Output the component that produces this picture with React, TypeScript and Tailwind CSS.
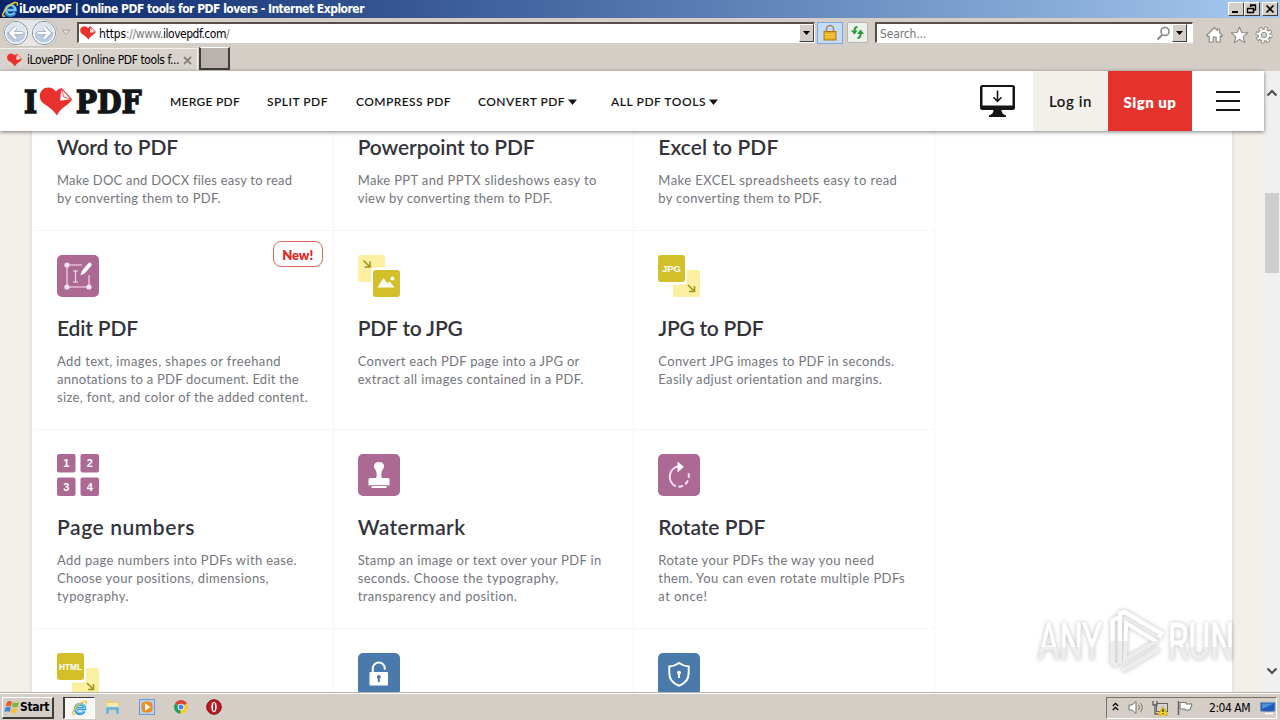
import React, { useLayoutEffect, useRef, useState } from "react";

const RALE = "font-['Lato','Open_Sans',sans-serif]";
const TAHOMA = "font-['DejaVu_Sans_Condensed','DejaVu_Sans',sans-serif]";

/* Text spaced out to an exact advance width. */
function Fit({ w, children, className = "" }: { w: number; children: string; className?: string }) {
  const ref = useRef<HTMLSpanElement>(null);
  const [spacing, setSpacing] = useState(0);
  useLayoutEffect(() => {
    const el = ref.current;
    if (!el) return;
    el.style.letterSpacing = "0px";
    const natural = el.getBoundingClientRect().width;
    const next = (w - natural) / children.length;
    el.style.letterSpacing = `${next}px`;
    setSpacing(next);
  }, [w, children]);
  return (
    <span ref={ref} className={`inline-block whitespace-pre ${className}`} style={{ letterSpacing: `${spacing}px` }}>
      {children}
    </span>
  );
}

function Heart({ className }: { className: string }) {
  return (
    <svg viewBox="0 0 34 30" className={className}>
      <path
        d="M18 29.500 C15 24 9 20.500 3.500 16.500 C-1.500 12 -.5 4.500 4.500 1.600 C9.500 -1 14.500 1 17 4.600 C18.500 2.500 20.500 1.500 23 1.200 L33.500 12.500 C32.500 18 22 20.500 18 29.500 Z"
        fill="#e8302c"
      />
      <path d="M22.300 3.200 L21.300 14.300 L32 12.800 Z" fill="#fff" />
      <path d="M23 2.200 L32.600 12.600 L25 10.300 Z" fill="#fff" stroke="#e8302c" strokeWidth=".8" />
    </svg>
  );
}

function IeLogo({ className }: { className: string }) {
  return (
    <svg viewBox="0 0 18 18" className={className}>
      <path d="M13.700 12.500 A5.300 5.300 0 1 1 14.300 9.700 H5.500" fill="none" stroke="#2c8fd2" strokeWidth="3.400" />
      <path d="M13.400 12 A5 5 0 1 1 14.200 9.500 H5.500" fill="none" stroke="#7cd2f8" strokeWidth="1.700" />
      <path d="M3.500 15.800 C-1.500 18 1 11 6 6.300 C11 1.500 18 -1 16 5" fill="none" stroke="#efc437" strokeWidth="1.600" />
    </svg>
  );
}

const P = "#ab6993";
const Y = "#d3bf2a";
const YL = "#fbf0a2";

function EditIcon() {
  return (
    <>
      <rect width="42" height="42" rx="5" fill={P} />
      <path d="M10 10H25M10 10V32H32V20" fill="none" stroke="#fbe3f5" strokeWidth="1.100" />
      <g fill="#fbe3f5">
        <circle cx="10" cy="10" r="2.600" /><circle cx="10" cy="32" r="2.600" /><circle cx="32" cy="32" r="2.600" />
      </g>
      <path d="M16 16h5M18.500 16v11M16 27h5" stroke="#fbe3f5" strokeWidth="1.100" fill="none" />
      <path d="M23.500 20.500 L24.800 16 L31.300 8.200 Q32.800 6.800 34.200 8.200 Q35.200 9.500 34.200 10.900 L27.600 18.500 Z" fill="#fff" />
    </>
  );
}
function Arrow({ x, y }: { x: number; y: number }) {
  return <path transform={`translate(${x} ${y})`} d="M0 0L6 6M6.500 1V6.500H1" fill="none" stroke="#a5911a" strokeWidth="1.600" />;
}
function PdfToJpgIcon() {
  return (
    <>
      <path d="M2 0H25Q27 0 27 2V12.500H16Q13 12.500 13 16V27H2Q0 27 0 25V2Q0 0 2 0Z" fill={YL} />
      <Arrow x={5.500} y={5.500} />
      <rect x="15" y="15" width="27" height="27" rx="3" fill={Y} />
      <path d="M19.500 32.500 L25.500 23 L29.500 28.500 L31.500 26.200 L36.500 32.500 Z" fill="#fff" />
      <circle cx="34.500" cy="23.500" r="1.900" fill="#fff" />
    </>
  );
}
function ToPdf({ label }: { label: string }) {
  return (
    <>
      <rect width="27" height="27" rx="3" fill={Y} />
      <path d="M29 15H40Q42 15 42 17V40Q42 42 40 42H17Q15 42 15 40V29.500H26Q29 29.500 29 27Z" fill={YL} />
      <text x="13.500" y="17" textAnchor="middle" textLength={label === "JPG" ? 19 : 23} lengthAdjust="spacingAndGlyphs" fill="#fff" className="font-['Liberation_Sans',sans-serif] text-[9px] font-bold">{label}</text>
      <Arrow x={30} y={30} />
    </>
  );
}
function NumbersIcon() {
  const cells: [string, number, number][] = [["1", 0, 0], ["2", 23.500, 0], ["3", 0, 23.500], ["4", 23.500, 23.500]];
  return (
    <>
      {cells.map(([n, x, y]) => (
        <g key={n}>
          <rect x={x} y={y} width="18.500" height="18.500" rx="2" fill={P} />
          <text x={x + 9.250} y={y + 13.200} textAnchor="middle" fill="#fff" className="font-['Liberation_Sans',sans-serif] text-[11px] font-bold">{n}</text>
        </g>
      ))}
    </>
  );
}
function StampIcon() {
  return (
    <>
      <rect width="42" height="42" rx="5" fill={P} />
      <path d="M18.300 24 C19 20 18.700 17.500 17.200 15.500 C14.200 11.500 17 8 21 8 C25 8 27.800 11.500 24.800 15.500 C23.300 17.500 23 20 23.700 24 H30 Q31.500 24 31.500 25.500 V31.500 H28.500 V34 H13.500 V31.500 H10.500 V25.500 Q10.500 24 12 24Z" fill="#fff" />
      <path d="M12 31.600H30" stroke={P} strokeWidth=".9" />
    </>
  );
}
function RotateIcon() {
  return (
    <>
      <rect width="42" height="42" rx="5" fill={P} />
      <path d="M17.800 32.300 A10.600 10.600 0 0 1 20.500 12.300" fill="none" stroke="#fbe3f5" strokeWidth="2" />
      <path d="M20.500 32.800 A10.600 10.600 0 0 0 29.500 17" fill="none" stroke="#fbe3f5" strokeWidth="2" strokeDasharray="4.500 2.800" />
      <path d="M19.500 7.500 L25.800 12.800 L19.500 18.500 Z" fill="#fff" />
    </>
  );
}
function UnlockIcon() {
  return (
    <>
      <rect width="42" height="42" rx="5" fill="#4a7aac" />
      <path d="M14.800 19V15.500a6 6 0 0 1 12 0V16.800" fill="none" stroke="#fff" strokeWidth="2" />
      <rect x="11.500" y="19" width="18.500" height="13.500" rx="1" fill="#fff" />
      <circle cx="20.800" cy="24" r="1.900" fill="#4a7aac" /><path d="M19.800 24h2v5h-2z" fill="#4a7aac" />
    </>
  );
}
function ShieldIcon() {
  return (
    <>
      <rect width="42" height="42" rx="5" fill="#4a7aac" />
      <path d="M21 10 Q25.500 13.200 30.700 13.400 V20 C30.700 26.500 27 30.500 21 32.700 C15 30.500 11.300 26.500 11.300 20 V13.400 Q16.500 13.200 21 10Z" fill="none" stroke="#fff" strokeWidth="2" />
      <circle cx="21" cy="19.700" r="2" fill="#fff" /><path d="M20 20h2v5h-2z" fill="#fff" />
    </>
  );
}

type Line = [string, number];
type Tool = { title: Line; lines: Line[]; icon: React.ReactNode; badge?: boolean };

const top: Tool[] = [
  { title: ["Word to PDF", 121], lines: [["Make DOC and DOCX files easy to read", 235], ["by converting them to PDF.", 164]], icon: null },
  { title: ["Powerpoint to PDF", 177], lines: [["Make PPT and PPTX slideshows easy to", 239], ["view by converting them to PDF.", 195]], icon: null },
  { title: ["Excel to PDF", 120], lines: [["Make EXCEL spreadsheets easy to read", 239], ["by converting them to PDF.", 164]], icon: null },
];
const middle: Tool[] = [
  { title: ["Edit PDF", 81], badge: true, icon: <EditIcon />, lines: [["Add text, images, shapes or freehand", 224], ["annotations to a PDF document. Edit the", 242], ["size, font, and color of the added content.", 251]] },
  { title: ["PDF to JPG", 105], icon: <PdfToJpgIcon />, lines: [["Convert each PDF page into a JPG or", 222], ["extract all images contained in a PDF.", 226]] },
  { title: ["JPG to PDF", 105], icon: <ToPdf label="JPG" />, lines: [["Convert JPG images to PDF in seconds.", 236], ["Easily adjust orientation and margins.", 224]] },
  { title: ["Page numbers", 138], icon: <NumbersIcon />, lines: [["Add page numbers into PDFs with ease.", 240], ["Choose your positions, dimensions,", 212], ["typography.", 72]] },
  { title: ["Watermark", 108], icon: <StampIcon />, lines: [["Stamp an image or text over your PDF in", 244], ["seconds. Choose the typography,", 201], ["transparency and position.", 160]] },
  { title: ["Rotate PDF", 107], icon: <RotateIcon />, lines: [["Rotate your PDFs the way you need", 216], ["them. You can even rotate multiple PDFs", 247], ["at once!", 49]] },
];
const bottom = [<ToPdf key="h" label="HTML" />, <UnlockIcon key="u" />, <ShieldIcon key="s" />];

function CardText({ tool }: { tool: Tool }) {
  return (
    <>
      <h3 className="h-[26px] text-[21px] font-semibold leading-[26px] text-[#33333b]"><Fit w={tool.title[1]}>{tool.title[0]}</Fit></h3>
      <div className="mt-[11px] text-[13px] leading-[18px] text-[#75757c]">
        {tool.lines.map(([t, w]) => <div key={t} className="h-[18px]"><Fit w={w}>{t}</Fit></div>)}
      </div>
    </>
  );
}

function TitleBar() {
  const btn = "flex h-[14px] w-4 items-center justify-center border border-t-white border-l-white border-r-[#404040] border-b-[#404040] bg-[#d5cec7]";
  return (
    <div className="flex h-[18px] items-center bg-linear-to-r from-[#0a246a] to-[#a6caf0] pr-[2px] pl-[2px]">
      <IeLogo className="h-[17px] w-[17px]" />
      <Fit w={345} className="text-[12px] font-bold leading-[18px] text-white">iLovePDF | Online PDF tools for PDF lovers - Internet Explorer</Fit>
      <div className="ml-auto flex">
        <div className={btn}><svg width="12" height="10"><path d="M2 8h6" stroke="#000" strokeWidth="2" /></svg></div>
        <div className={btn}><svg width="12" height="10"><path d="M4.500 3V1.500H9.500V6H8M4 1h6M1.500 4.500h6v4h-6zM1 4.500h7" fill="none" stroke="#000" strokeWidth="1.300" /></svg></div>
        <div className={`ml-[2px] ${btn}`}><svg width="10" height="10"><path d="M1.500 1.500l7 7M8.500 1.500l-7 7" stroke="#000" strokeWidth="1.700" /></svg></div>
      </div>
    </div>
  );
}

function NavCircle({ flip }: { flip?: boolean }) {
  return (
    <svg width="26" height="26" viewBox="0 0 26 26" className={flip ? "-scale-x-100" : ""}>
      <circle cx="13" cy="13" r="11.500" fill="#bccbde" stroke="#7d8794" />
      <circle cx="13" cy="13" r="10.300" fill="none" stroke="#f4f8fb" strokeWidth="1.500" />
      <path d="M3 12a10 10 0 0 1 20 0Z" fill="#dce4ee" />
      <path d="M19.500 13H8M13 7.500L7.500 13l5.500 5.500" fill="none" stroke="#8fa0b8" strokeWidth="4" />
      <path d="M19.500 13H8M13 7.500L7.500 13l5.500 5.500" fill="none" stroke="#fff" strokeWidth="2.600" />
    </svg>
  );
}

function DropButton() {
  return (
    <div className="flex h-[18px] w-[15px] items-center justify-center border border-t-white border-l-white border-r-[#404040] border-b-[#404040] bg-[#d5cec7]">
      <svg width="7" height="4"><path d="M0 0h7L3.500 4z" fill="#000" /></svg>
    </div>
  );
}

function AddressBar() {
  const field = "flex h-[21px] items-center border border-t-2 border-t-[#55504c] border-l-2 border-l-[#55504c] border-r-white border-b-white bg-white";
  return (
    <div className="flex h-[29px] items-center bg-[#d5cec7] pl-[3px]">
      <div className="flex rounded-full bg-[#e6e6e7] shadow-[0_0_1px_#777]"><NavCircle /><span className="w-[2px]" /><NavCircle flip /></div>
      <svg width="10" height="7" className="ml-[4px]"><path d="M1 1h8L5 5.500z" fill="#e4dfda" stroke="#a8a29c" /></svg>
      <div className={`ml-[6px] w-[738px] ${field}`}>
        <Heart className="ml-[1px] h-[14px] w-[16px]" />
        <div className="ml-[3px] mt-[1px] flex text-[12px] leading-[16px] text-[#777]">
          <Fit w={27} className="text-black">https</Fit><Fit w={37}>://www.</Fit><Fit w={63} className="text-black">ilovepdf.com</Fit><Fit w={4}>/</Fit>
        </div>
        <div className="ml-auto"><DropButton /></div>
      </div>
      <div className="ml-[2px] flex h-[22px] w-[26px] items-center justify-center border border-[#7fa9da] bg-[#c4dcf8]">
        <svg width="14" height="17"><path d="M3.500 8V5a3.500 3.500 0 0 1 7 0v3" fill="none" stroke="#9c8c64" strokeWidth="1.600" /><rect x="1" y="7.500" width="12" height="8.500" fill="#e9ae1d" stroke="#b57b12" /><path d="M2 10.500h10M2 13h10" stroke="#f8d258" /></svg>
      </div>
      <div className="ml-[4px] flex h-[21px] w-[21px] items-center justify-center rounded-[2px] border border-[#b9b5b0] bg-[#edf1ee]">
        <svg width="15" height="15"><path d="M7.500 2C5 2 4.500 3.500 4.500 6M7.500 13c2.500 0 3-1.500 3-4" fill="none" stroke="#2c9a35" strokeWidth="2" /><path d="M.8 5.500h7L4.500 9.500zM7.200 9h7L10.500 4.500z" fill="#2c9a35" /></svg>
      </div>
      <div className={`ml-[7px] w-[318px] ${field}`}>
        <Fit w={46} className="ml-[3px] mt-[1px] text-[12px] leading-[16px] text-[#777]">Search...</Fit>
        <svg width="15" height="15" className="ml-auto"><circle cx="9" cy="5.500" r="4" fill="none" stroke="#888" strokeWidth="1.600" /><path d="M6 9L1.500 13.500" stroke="#888" strokeWidth="2.200" /></svg>
        <div className="mr-[5px] ml-[1px]"><DropButton /></div>
      </div>
      <svg width="72" height="20" viewBox="0 0 72 20" className="mt-[4px] ml-[12px]" fill="#fff" stroke="#8b8783" strokeWidth="1.100" strokeLinejoin="round">
        <path d="M1.500 10.500L9.500 2.500l3 3V4h2v3.500l3 3-1.300 1.300-1-1V17h-4v-5h-3v5h-4v-6.200l-1 1z" />
        <path d="M34.500 2l2.300 5.500 6 .4-4.600 3.900 1.500 5.800-5.200-3.200-5.200 3.200 1.500-5.800L26.200 7.900l6-.4z" />
        <circle cx="59" cy="10" r="6.500" fill="none" stroke="#85817d" strokeWidth="4" strokeDasharray="3.200 1.905" strokeDashoffset=".6" />
        <circle cx="59" cy="10" r="4.500" fill="none" stroke="#85817d" strokeWidth="4.500" />
        <circle cx="59" cy="10" r="6.500" fill="none" stroke="#fff" strokeWidth="2.400" strokeDasharray="2 3.105" />
        <circle cx="59" cy="10" r="4.300" fill="none" stroke="#fff" strokeWidth="2.600" />
      </svg>
    </div>
  );
}

function TabStrip() {
  return (
    <div className="flex h-6 bg-[#d5cec7]">
      <div className="mt-[1px] flex h-[23px] w-[198px] items-center border-t border-r border-[#f3f0ed] bg-[#d8d2cc] pl-[7px]">
        <Heart className="h-[14px] w-[15px]" />
        <Fit w={152} className="ml-[5px] text-[12px] leading-[16px]">iLovePDF | Online PDF tools f...</Fit>
        <svg width="9" height="9" className="ml-[4px]"><path d="M1 1l7 7M8 1L1 8" stroke="#88827d" strokeWidth="1.800" /></svg>
      </div>
      <div className="ml-[1px] h-[23px] w-[31px] border-2 border-t border-t-white border-l-[#403c3a] border-r-[#403c3a] border-b-[#403c3a] bg-[#b9b2ad]" />
    </div>
  );
}

function Header() {
  const item = "text-[12px] font-semibold leading-[16px] text-[#161616]";
  const caret = <svg width="9" height="6" className="mb-[1px]"><path d="M0 .5h9L4.500 6z" fill="#161616" /></svg>;
  return (
    <header className={`z-10 flex h-[60px] items-center bg-white shadow-[0_1px_4px_rgba(0,0,0,0.5)] ${RALE}`}>
      <div className="flex w-[170px] items-center pt-[1px] pl-[24px] font-['DejaVu_Serif_Condensed','DejaVu_Serif',serif] text-[31px] font-bold leading-[30px] text-[#121619] [-webkit-text-stroke:1.500px_#121619]">
        <Fit w={13}>I</Fit><Heart className="mr-[3px] ml-[2px] h-[29px] w-[34px]" /><Fit w={66}>PDF</Fit>
      </div>
      <nav className="mt-[2px] flex h-[18px] items-center">
        <Fit w={70} className={item}>MERGE PDF</Fit>
        <Fit w={61} className={`ml-[27px] ${item}`}>SPLIT PDF</Fit>
        <Fit w={95} className={`ml-[28px] ${item}`}>COMPRESS PDF</Fit>
        <div className="ml-[27px] flex items-center gap-[3px]"><Fit w={87} className={item}>CONVERT PDF</Fit>{caret}</div>
        <div className="ml-[34px] flex items-center gap-[3px]"><Fit w={95} className={item}>ALL PDF TOOLS</Fit>{caret}</div>
      </nav>
      <svg width="35" height="33" viewBox="0 0 35 33" className="mr-[18px] ml-auto">
        <path fillRule="evenodd" d="M2.500 0h30Q35 0 35 2.500V22.500Q35 25 32.500 25H21.500Q21.500 29 26 30.500V32H9V30.500Q13.500 29 13.500 25H2.500Q0 25 0 22.500V2.500Q0 0 2.500 0ZM2.500 2V20.500H32.500V2Z" fill="#161616" />
        <path d="M17.500 5.500V16M13.500 12.300l4 4 4-4" fill="none" stroke="#161616" strokeWidth="1.600" />
      </svg>
      <div className="flex h-full w-[75px] items-center justify-center bg-[#f3f0ec] pb-[1px] text-[15px] font-semibold text-[#161616]"><Fit w={43} className="mt-[2px]">Log in</Fit></div>
      <div className="flex h-full w-[84px] items-center justify-center bg-[#e5322d] text-[15px] font-extrabold text-white"><Fit w={53} className="mt-[2px]">Sign up</Fit></div>
      <div className="flex w-[72px] flex-col items-center gap-[7px]"><span className="h-[2px] w-6 bg-[#161616]" /><span className="h-[2px] w-6 bg-[#161616]" /><span className="h-[2px] w-6 bg-[#161616]" /></div>
    </header>
  );
}

function Tools() {
  const edge = "border-r border-b border-[#f6f6f8] pl-6";
  return (
    <main className={`flex-1 overflow-hidden bg-[#f3f0ec] pl-8 ${RALE}`}>
      <div className="h-full w-[1200px] bg-white pl-[1px] shadow-[0_0_4px_rgba(0,0,0,0.14)]">
        <div className="grid w-[902px] grid-cols-3">
          {top.map((t) => <div key={t.title[0]} className={`h-[100px] pt-[3px] ${edge}`}><CardText tool={t} /></div>)}
          {middle.map((t) => (
            <div key={t.title[0]} className={`relative h-[199px] pt-6 ${edge}`}>
              <svg width="42" height="42" viewBox="0 0 42 42" className="mb-[18px] block">{t.icon}</svg>
              <CardText tool={t} />
              {t.badge && <div className="absolute top-[10px] right-[10px] flex h-[26px] w-[50px] items-center justify-center rounded-lg border border-[#e0675c] text-[13px] font-extrabold text-[#dc2d2b]"><Fit w={31} className="mt-[3px]">New!</Fit></div>}
            </div>
          ))}
          {bottom.map((icon, i) => <div key={i} className={`h-[80px] pt-6 ${edge}`}><svg width="42" height="42" viewBox="0 0 42 42">{icon}</svg></div>)}
        </div>
      </div>
    </main>
  );
}

function ScrollBar() {
  return (
    <div className="flex w-4 flex-col items-center bg-[#f0f0f0]">
      <svg width="12" height="8" className="mt-[18px]"><path d="M1.500 6.500L6 2l4.500 4.500" fill="none" stroke="#505050" strokeWidth="2.200" /></svg>
      <div className="mt-24 h-20 w-[14px] bg-[#cdcdcd]" />
      <svg width="12" height="8" className="mt-auto mb-[17px]"><path d="M1.500 1.500L6 6l4.500-4.500" fill="none" stroke="#505050" strokeWidth="2.200" /></svg>
    </div>
  );
}

function Watermark() {
  const font = "font-['Roboto',sans-serif] text-[50px]";
  return (
    <svg width="216" height="72" viewBox="0 0 216 72" className="absolute top-[606px] left-[1032px] drop-shadow-[0_0_2px_rgba(0,0,0,0.27)]">
      <defs>
        <linearGradient id="fade" x1="0" y1="0" x2="0" y2="1">
          <stop offset="0.580" stopColor="#fff" /><stop offset="0.590" stopColor="#ededed" />
        </linearGradient>
        <linearGradient id="fadeLine" gradientUnits="userSpaceOnUse" x1="0" y1="0" x2="0" y2="72">
          <stop offset="0.480" stopColor="#fff" /><stop offset="0.490" stopColor="#ededed" />
        </linearGradient>
      </defs>
      <g fill="url(#fade)" stroke="url(#fade)" strokeWidth="1">
        <text x="6" y="53" textLength="64" lengthAdjust="spacingAndGlyphs" className={font}>ANY</text>
        <text x="136" y="53" textLength="66" lengthAdjust="spacingAndGlyphs" className={font}>RUN</text>
      </g>
      <g fill="none" stroke="url(#fadeLine)" strokeWidth="4.500">
        <path d="M87 11.500L80.500 14.500V57L86 60M90 63L93 63.500L127 43" />
        <path d="M88 58V7.500L93 6L129 27.500L127 32" />
        <path d="M94 17L124 35.500L93 53.500Z" strokeWidth="4" />
      </g>
    </svg>
  );
}

function TaskBar() {
  return (
    <div className="flex h-7 items-center border-t border-[#b9b4ae] bg-[#d5cec7] pr-[3px] pl-[2px] shadow-[inset_0_1px_0_#fff]">
      <div className="mt-[2px] flex h-[22px] w-[52px] items-center border border-t-white border-r-2 border-b-2 border-l-white border-r-[#403c3a] border-b-[#403c3a]">
        <svg width="16" height="16" viewBox="0 0 16 16" className="ml-[1px] shrink-0">
          <path d="M3 3Q6 1 8 3L7 7.500Q4.500 6 1.800 7.700Z" fill="#e8592b" /><path d="M9 3.300Q12 4.800 15 3L13.800 7.500Q11 9 8 7.700Z" fill="#78b936" />
          <path d="M1.500 8.700Q4.500 7 6.800 8.500L5.700 13Q3 11.500.3 13Z" fill="#3c87d4" /><path d="M7.800 9Q10.500 10.300 13.500 8.700L12.300 13.200Q9.500 15 6.700 13.300Z" fill="#f5c034" />
        </svg>
        <Fit w={29} className="text-[12px] font-bold">Start</Fit>
      </div>
      <div className="mt-[2px] ml-[9px] flex h-[22px] w-[32px] items-center justify-center border border-t-[#403c3a] border-r-white border-b-white border-l-2 border-l-[#403c3a] bg-[#f8f7f5]"><IeLogo className="h-4 w-4" /></div>
      <svg width="16" height="16" className="mt-[1px] ml-[10px]"><path d="M1 3V1.500h5l1 1.500h7v9H1z" fill="#ecd16d" /><path d="M2 4h11v5H2z" fill="#f9ebaa" /><path d="M1 15V9q0-1 1-1h11q1 0 1 1v6h-3v-4H4v4z" fill="#62afd6" stroke="#aad7ea" strokeWidth=".7" /></svg>
      <svg width="16" height="16" className="mt-[1px] ml-[18px]"><rect x=".5" y=".5" width="15" height="15" fill="#b8d3ee" stroke="#6a9bd1" /><rect x="2.500" y="2.500" width="11" height="11" rx="4" fill="#f08b1d" /><path d="M6 4.300L11.500 8 6 11.700z" fill="#fff" /></svg>
      <svg width="14" height="14" viewBox="0 0 14 14" className="mt-[1px] ml-[19px]"><path d="M7 7L1 3.500A7 7 0 0 1 13 3.500z" fill="#dc4437" /><path d="M7 7L1 3.500A7 7 0 0 0 6.500 14z" fill="#2c9d59" /><path d="M7 7L13 3.500A7 7 0 0 1 6.500 14z" fill="#f7ca3c" /><circle cx="7" cy="7" r="3.300" fill="#fff" /><circle cx="7" cy="7" r="2.500" fill="#4684ee" /></svg>
      <svg width="16" height="16" className="mt-[1px] ml-[18px]"><circle cx="8" cy="8" r="7.300" fill="#bd1820" stroke="#77141a" /><ellipse cx="8" cy="8" rx="2.700" ry="5.300" fill="#fff" /><ellipse cx="8" cy="8" rx="1" ry="4.300" fill="#bd1820" /></svg>
      <div className="mt-[2px] ml-auto flex h-[22px] w-[171px] items-center border border-t-[#77716c] border-r-white border-b-white border-l-[#77716c] pl-[5px]">
        <svg width="7" height="9" className="mb-[2px]"><path d="M.8 4L3.500 1.300 6.200 4M.8 8L3.500 5.300 6.200 8" fill="none" stroke="#000" strokeWidth="1.300" /></svg>
        <svg width="17" height="15" className="ml-[9px]"><path d="M1 5h3l4-3.500v12L4 10H1z" fill="#fff" stroke="#77736f" /><path d="M10.500 5q2 2.500 0 5M12.500 3q3.500 4.500 0 9" fill="none" stroke="#77736f" /></svg>
        <svg width="17" height="16" className="ml-[7px]"><rect x="4.500" y="3.500" width="11" height="8" fill="#d3d3d3" stroke="#66625f" /><path d="M1 1v4h4V1M3 5v9h3" fill="none" stroke="#66625f" strokeWidth="1.300" /><path d="M11 6.500l5 8.500H6z" fill="#fbd61e" stroke="#d4a90a" /><path d="M11 9v3M11 13v1" stroke="#222" strokeWidth="1.300" /></svg>
        <svg width="17" height="16" className="ml-[8px]"><path d="M1.500 1v14" stroke="#66625f" strokeWidth="1.500" /><path d="M3 2.500h6v1.500h6l-2 6H8V9H3z" fill="#fff" stroke="#77736f" /></svg>
        <Fit w={41} className="ml-[15px] text-[12px]">2:04 AM</Fit>
        <svg width="16" height="14" className="ml-[10px]"><path d="M.5 1.500h14.500v8.500q-7 1.500-14.500 0z" fill="#1f59bd" stroke="#7c94b5" /><path d="M2 2.500h12L2 8z" fill="#4e91dc" /><path d="M5 12.500h8" stroke="#fff" strokeWidth="1.500" /></svg>
      </div>
    </div>
  );
}

export default function App() {
  return (
    <div className={`relative flex h-[720px] w-[1280px] flex-col overflow-hidden text-black ${TAHOMA}`}>
      <TitleBar />
      <AddressBar />
      <TabStrip />
      <div className="flex min-h-0 flex-1">
        <div className="flex min-w-0 flex-1 flex-col">
          <Header />
          <Tools />
        </div>
        <ScrollBar />
      </div>
      <TaskBar />
      <Watermark />
    </div>
  );
}
